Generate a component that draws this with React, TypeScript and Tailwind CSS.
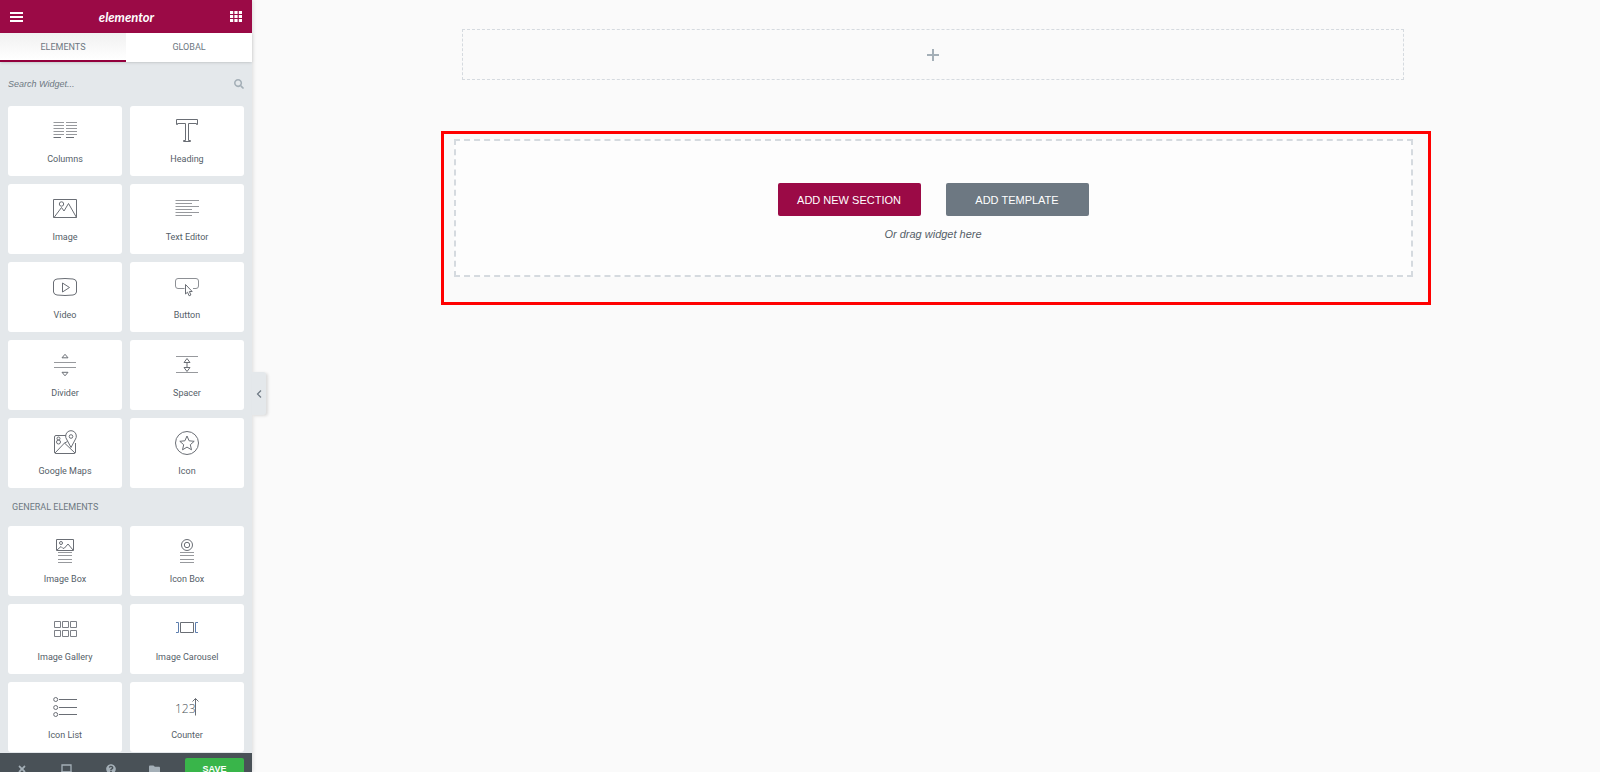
import type { ReactNode } from 'react'
import { FaFolder, FaQuestionCircle, FaSearch, FaTimes } from 'react-icons/fa'

type Widget = { name: string; icon: ReactNode }

function TextLines({ from, to, rows }: { from: number; to: number; rows: number[] }) {
  return (
    <>
      {rows.map((y) => (
        <path key={y} d={`M${from} ${y}H${to}`} stroke="#97999d" />
      ))}
    </>
  )
}

const BASIC: Widget[] = [
  {
    name: 'Columns',
    icon: (
      <>
        <TextLines from={0.5} to={11} rows={[3.5, 6.5, 9.5, 12.5, 15.5]} />
        <TextLines from={13} to={24} rows={[3.5, 6.5, 9.5, 12.5, 15.5]} />
        <path d="M.5 18.5H8M13 18.5h8" />
      </>
    ),
  },
  {
    name: 'Heading',
    icon: <path d="M1.5 .5h21v5h-1v-1H13.500v17h2v1h-7v-1h2v-17H2.500v1h-1z" />,
  },
  {
    name: 'Image',
    icon: (
      <>
        <path d="M.5 2.500h23v18H.5z" />
        <circle cx="8.500" cy="7" r="2.200" />
        <path d="M1 20.500l7.500-10 2.500 3.500 4.500-7.500 8 14" />
      </>
    ),
  },
  {
    name: 'Text Editor',
    icon: (
      <>
        <TextLines from={0.5} to={24} rows={[3.5, 9.5, 15.5]} />
        <TextLines from={0.5} to={17} rows={[6.5, 12.5, 18.5]} />
      </>
    ),
  },
  {
    name: 'Video',
    icon: (
      <>
        <path d="M4 4q8-1 16 0 3 .3 3.500 3v10q-.5 2.700-3.500 3-8 1-16 0-3-.3-3.500-3V7Q1 4.300 4 4z" />
        <path d="M9.500 8v9l7-4.500z" />
      </>
    ),
  },
  {
    name: 'Button',
    icon: (
      <>
        <path
          d="M9.500 13.500H3Q.5 13.500 .5 11V6Q.5 3.500 3 3.500h18q2.500 0 2.500 2.500v5q0 2.500-2.500 2.500h-3"
          stroke="#8d9095"
        />
        <path d="M10.500 9.500v9.500l2-1.800 1.600 3.600 1.800-.8-1.500-3.500h2.800z" />
      </>
    ),
  },
  {
    name: 'Divider',
    icon: (
      <>
        <path d="M9 4.800l3-3.500 3 3.500zM9 19.300l3 3.500 3-3.500z" />
        <TextLines from={1} to={23} rows={[9.5, 14.5]} />
      </>
    ),
  },
  {
    name: 'Spacer',
    icon: (
      <>
        <TextLines from={1} to={23} rows={[3.5, 19.5]} />
        <path d="M9 9.500l3-4 3 4zM9 14.500l3 4 3-4zM12 9v6" />
      </>
    ),
  },
  {
    name: 'Google Maps',
    icon: (
      <>
        <path d="M13 4.500H3q-1.500 0-1.500 1.500v15q0 1.500 1.500 1.500h18q1.500 0 1.500-1.500V12" />
        <path d="M18 16.500L13.500 8Q12.500 6.500 12.700 5a5.300 5.300 0 0 1 10.600 0q.2 1.500-.8 3z" />
        <circle cx="18" cy="5.500" r="1.800" />
        <path d="M2 22l9.500-10L22 22M11.500 12l3-1.500" />
        <circle cx="5.500" cy="7.500" r="1.500" />
        <circle cx="5.500" cy="11" r="2" />
      </>
    ),
  },
  {
    name: 'Icon',
    icon: (
      <>
        <circle cx="12" cy="12" r="11.500" />
        <path d="M12 5l2.100 4.800 5.100.5-3.900 3.400 1.200 5.100-4.500-2.700-4.500 2.700 1.200-5.100-3.900-3.400 5.100-.5z" />
      </>
    ),
  },
]

const GENERAL: Widget[] = [
  {
    name: 'Image Box',
    icon: (
      <>
        <path d="M3.500 .5h17v11h-17z" />
        <circle cx="8" cy="4" r="1.500" />
        <path d="M4 11l4-3.500L10 9.500l1.500-.5L15 5l5 6" />
        <TextLines from={5} to={19} rows={[13.5, 16.5, 20.5, 23.5]} />
      </>
    ),
  },
  {
    name: 'Icon Box',
    icon: (
      <>
        <circle cx="12" cy="6" r="5.500" />
        <circle cx="12" cy="6" r="2.700" />
        <TextLines from={5} to={19} rows={[13.5, 16.5, 20.5, 23.5]} />
      </>
    ),
  },
  {
    name: 'Image Gallery',
    icon: (
      <>
        <path d="M1.500 4.500h6v6h-6zM9.500 4.500h6v6h-6zM17.500 4.500h6v6h-6z" stroke="#7d8087" />
        <path d="M1.500 13.500h6v6h-6zM9.500 13.500h6v6h-6zM17.500 13.500h6v6h-6z" stroke="#7d8087" />
      </>
    ),
  },
  {
    name: 'Image Carousel',
    icon: (
      <>
        <path d="M5.500 5.500h13v10h-13z" />
        <path d="M1 5.500h2.500v10H1M23 5.500h-2.500v10H23" stroke="#5d7eae" />
      </>
    ),
  },
  {
    name: 'Icon List',
    icon: (
      <>
        <circle cx="2.700" cy="4.500" r="2" />
        <circle cx="2.700" cy="12.500" r="2" />
        <circle cx="2.700" cy="19.500" r="2" />
        <path d="M6 4.500h18M6 12.500h18M6 19.500h18" />
      </>
    ),
  },
  {
    name: 'Counter',
    icon: (
      <>
        <text x="0" y="18" fontSize="12" fontWeight="300" fill="#495157" stroke="none" className="font-['Open_Sans']">
          123
        </text>
        <path d="M20.500 20.500v-17M17.500 6.500l3-3 3 3" />
      </>
    ),
  },
]

function WidgetGrid({ widgets }: { widgets: Widget[] }) {
  return (
    <div className="grid grid-cols-2 gap-2 px-2">
      {widgets.map((w) => (
        <button
          key={w.name}
          type="button"
          className="flex h-[70px] flex-col items-center rounded-[3px] bg-white pt-[13px] text-[9px] leading-4 text-[#556068]"
        >
          <svg viewBox="0 0 24 24" className="mb-2 size-6 overflow-visible" fill="none" stroke="#6a6e75">
            {w.icon}
          </svg>
          {w.name}
        </button>
      ))}
    </div>
  )
}

function Panel() {
  return (
    <aside className="relative z-10 flex w-[252px] shrink-0 flex-col bg-[#e4e8eb] shadow-[1px_0_4px_rgba(0,0,0,0.12)]">
      <header className="flex h-[33px] shrink-0 items-center justify-between bg-[#9b0a46] px-[10px] text-white">
        <button type="button" aria-label="Menu">
          <svg viewBox="0 0 13 11" className="h-[11px] w-[13px]" fill="currentColor">
            <path d="M0 1h13v2H0zM0 5h13v2H0zM0 9h13v2H0z" />
          </svg>
        </button>
        <span className="font-['Lato'] text-[13px] font-bold italic leading-4">elementor</span>
        <button type="button" aria-label="Widgets">
          <svg viewBox="0 0 12 11" className="h-[11px] w-3" fill="currentColor">
            <path d="M0 0h3.200v3H0zM4.400 0h3.200v3H4.400zM8.800 0H12v3H8.800zM0 4h3.200v3H0zM4.400 4h3.200v3H4.400zM8.800 4H12v3H8.800zM0 8h3.200v3H0zM4.400 8h3.200v3H4.400zM8.800 8H12v3H8.800z" />
          </svg>
        </button>
      </header>

      <nav className="grid h-[29px] shrink-0 grid-cols-2 bg-white text-[9px] leading-4 text-[#6d7882] shadow-sm">
        <button type="button" className="border-b-2 border-[#93003c] bg-linear-to-b from-[#f1f1f1] to-white">
          ELEMENTS
        </button>
        <button type="button" className="border-b-2 border-transparent">
          GLOBAL
        </button>
      </nav>

      <label className="flex h-11 shrink-0 items-center px-2">
        <input
          type="text"
          aria-label="Search Widget"
          placeholder="Search Widget..."
          className="min-w-0 flex-1 font-['Liberation_Sans'] text-[9px] italic leading-4 outline-none placeholder:text-[#6d7882]"
        />
        <FaSearch size={10} className="text-[#a4afb7]" />
      </label>

      <div className="min-h-0 flex-1 overflow-hidden">
        <WidgetGrid widgets={BASIC} />
        <h2 className="flex h-[38px] items-center px-3 text-[9px] leading-4 text-[#6d7882]">GENERAL ELEMENTS</h2>
        <WidgetGrid widgets={GENERAL} />
      </div>

      {/* the bar runs past the bottom edge of the window */}
      <footer className="h-[19px] shrink-0 overflow-hidden bg-[#495157] text-[#a4afb7]">
        <div className="flex h-8 items-center pr-2">
          <div className="grid flex-1 grid-cols-4 justify-items-center pr-2">
            <button type="button" aria-label="Close">
              <FaTimes size={10} />
            </button>
            <button type="button" aria-label="Responsive mode">
              <svg viewBox="0 0 11 11" className="size-[11px]" fill="none" stroke="currentColor">
                <path d="M1 1h9v7H1z" strokeWidth="1.300" />
                <path d="M0 8.500h11" strokeWidth="2" />
              </svg>
            </button>
            <button type="button" aria-label="Help">
              <FaQuestionCircle size={10} />
            </button>
            <button type="button" aria-label="Templates">
              <FaFolder size={11} />
            </button>
          </div>
          <button
            type="button"
            className="h-[22px] w-[59px] rounded-[2px] bg-[#39b54a] font-['Liberation_Sans'] text-[9px] font-bold leading-4 text-white"
          >
            SAVE
          </button>
        </div>
      </footer>

      <button
        type="button"
        aria-label="Collapse panel"
        className="absolute left-full top-[372px] flex h-[43px] w-[14px] items-center justify-center rounded-r-[3px] bg-[#e4e8eb] text-[#6d7882] shadow-[2px_1px_3px_rgba(0,0,0,0.12)]"
      >
        <svg viewBox="0 0 6 8" className="h-2 w-[6px]" fill="none" stroke="currentColor" strokeWidth="1.200">
          <path d="M5 .5L1.500 4 5 7.500" />
        </svg>
      </button>
    </aside>
  )
}

function Canvas() {
  return (
    <main className="flex flex-1 flex-col items-center bg-[#fafafa] pl-[46px] pr-8 pt-[29px]">
      <button
        type="button"
        aria-label="Add section"
        className="flex h-[51px] w-full max-w-[942px] items-center justify-center border border-dashed border-[#d5dadf] text-[#a4afb7]"
      >
        <svg viewBox="0 0 12 12" className="size-3" fill="none" stroke="currentColor" strokeWidth="2">
          <path d="M6 0v12M0 6h12" />
        </svg>
      </button>

      <section className="relative mt-[59px] w-full max-w-[959px]">
        <div className="flex flex-col items-center border-2 border-dashed border-[#d5dadf] bg-[#fdfdfd] pb-[33px] pt-[42px] font-['Liberation_Sans']">
          <div className="flex gap-[25px] text-[11px] leading-4 text-white">
            <button type="button" className="h-[33px] w-[143px] rounded-[2px] bg-[#9b0a46]">
              ADD NEW SECTION
            </button>
            <button type="button" className="h-[33px] w-[143px] rounded-[2px] bg-[#6d7882]">
              ADD TEMPLATE
            </button>
          </div>
          <p className="mt-[10px] text-[11px] italic leading-4 text-[#556068]">Or drag widget here</p>
        </div>
        <div className="pointer-events-none absolute -bottom-7 -left-[13px] -right-[18px] -top-2 border-3 border-[#ff0000]" />
      </section>
    </main>
  )
}

export default function App() {
  return (
    <div className="flex h-screen overflow-hidden bg-[#fafafa] font-['Roboto',sans-serif]">
      <Panel />
      <Canvas />
    </div>
  )
}
